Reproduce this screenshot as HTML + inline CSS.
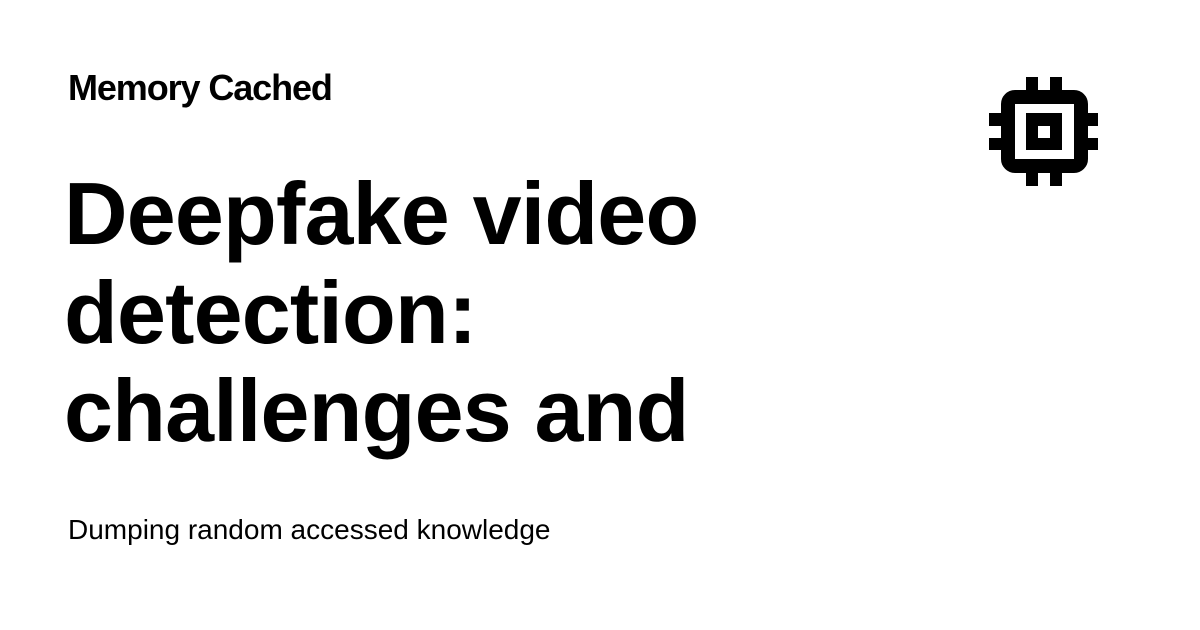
<!DOCTYPE html>
<html><head><style>
body{margin:0;width:1200px;height:630px;background:#fff;position:relative;overflow:hidden;font-family:"Liberation Sans",sans-serif;color:#000}
.a{position:absolute;left:68px;white-space:nowrap}
</style></head><body>
<div class="a" style="top:68px;font-size:36px;font-weight:bold;line-height:40px;letter-spacing:-1.1px">Memory Cached</div>
<div class="a" style="top:0;font-size:88px;font-weight:bold;line-height:99px;letter-spacing:-0.8px">
<div style="position:absolute;top:164px;left:-4px">Deepfake video</div>
<div style="position:absolute;top:263px;left:-4px">detection:</div>
<div style="position:absolute;top:361px;left:-4px">challenges and</div>
</div>
<div class="a" style="top:513px;font-size:28px;line-height:34px;letter-spacing:0px">Dumping random accessed knowledge</div>
<svg style="position:absolute;left:0;top:0" width="1200" height="630">
<rect x="1008" y="97" width="73" height="69" rx="7" fill="none" stroke="#000" stroke-width="14"/>
<rect x="1026" y="113" width="36" height="37" fill="#000"/>
<rect x="1038" y="126" width="12" height="12" fill="#fff"/>
<g fill="#000">
<rect x="1026" y="77" width="12" height="14"/><rect x="1050" y="77" width="12" height="14"/>
<rect x="1026" y="172" width="12" height="14"/><rect x="1050" y="172" width="12" height="14"/>
<rect x="989" y="113" width="13" height="13"/><rect x="989" y="138" width="13" height="12"/>
<rect x="1087" y="113" width="11" height="13"/><rect x="1087" y="138" width="11" height="12"/>
</g>
</svg>
</body></html>
